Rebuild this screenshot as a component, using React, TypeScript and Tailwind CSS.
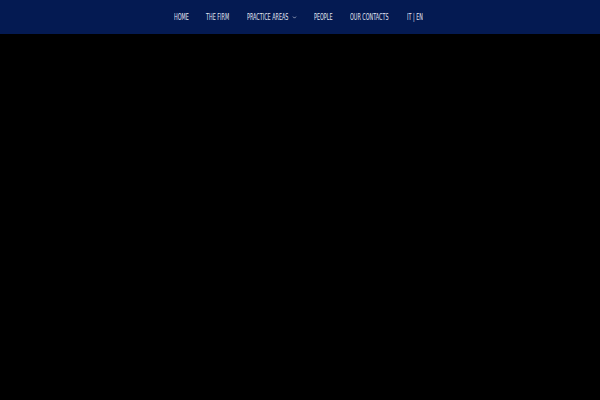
import { ChevronDown } from 'lucide-react'

const items = [
  { label: 'HOME', w: 'w-[15px]' },
  { label: 'THE FIRM', w: 'w-[24px]' },
  { label: 'PRACTICE AREAS', w: 'w-[44px]', caret: true },
  { label: 'PEOPLE', w: 'w-[19px]' },
  { label: 'OUR CONTACTS', w: 'w-[40px]' },
  { label: 'IT | EN', w: 'w-[15px]' },
]

export default function App() {
  return (
    <div className="min-h-screen h-[400px] bg-black flex flex-col">
      {/* Header */}
      <header className="h-[34px] bg-[#041a52] flex items-center justify-center shadow-[0_1px_3px_rgba(0,0,0,0.6)]">
        <nav className="flex items-center gap-[17px] pr-[4px] text-[#e3e7f2] font-['DejaVu_Sans_Condensed','DejaVu_Sans',sans-serif] text-[9.5px] leading-none">
          {items.map((item) => (
            <a key={item.label} href="#" className="flex items-center">
              <span className={`${item.w} whitespace-nowrap`}>
                <span className="inline-block origin-left scale-x-[0.57] whitespace-nowrap">{item.label}</span>
              </span>
              {item.caret && <ChevronDown className="w-[5px] h-[5px] ml-[1px] text-[#e3e7f2]" strokeWidth={3} />}
            </a>
          ))}
        </nav>
      </header>
      <main className="flex-1 bg-black" />
    </div>
  )
}
